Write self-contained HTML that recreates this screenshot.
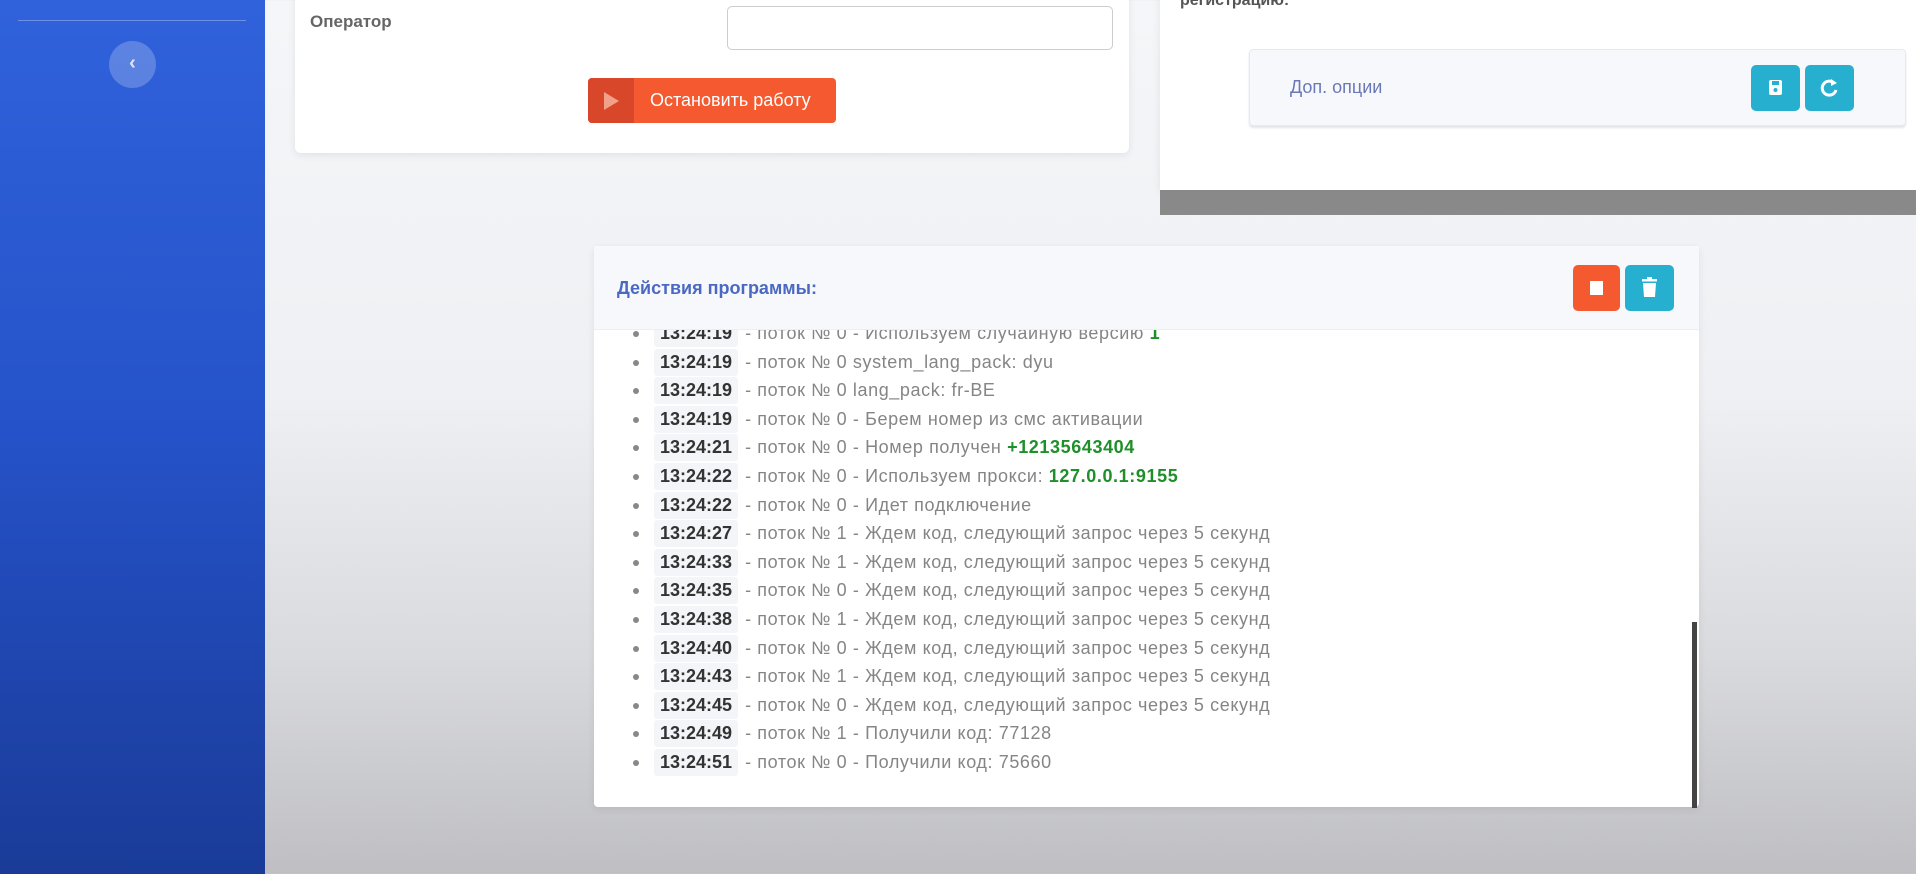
<!DOCTYPE html>
<html><head><meta charset="utf-8"><style>
*{box-sizing:border-box;margin:0;padding:0}
body{width:1916px;height:874px;overflow:hidden;position:relative;font-family:"Liberation Sans","Noto Sans CJK SC",sans-serif;background:linear-gradient(180deg,#f5f6f9 0%,#eef0f3 45%,#d9dadd 75%,#bfbfc3 100%)}
.sb{position:absolute;left:0;top:0;width:265px;height:874px;background:linear-gradient(180deg,#3062dc 0%,#2552c8 50%,#1a3b98 100%)}
.sb .ln{position:absolute;left:18px;top:20px;width:228px;height:1px;background:rgba(255,255,255,.3)}
.sb .cb{position:absolute;left:109px;top:41px;width:47px;height:47px;border-radius:50%;background:rgba(255,255,255,.22);color:#dfe6fb;font-size:20px;text-align:center;line-height:45px;font-weight:bold}
.card{position:absolute;background:#fff;box-shadow:0 2px 8px rgba(0,0,0,.08)}
.c1{left:295px;top:-10px;width:834px;height:163px;border-radius:6px}
.lab{position:absolute;left:15px;top:22px;font-size:17px;color:#666;font-weight:bold}
.inp{position:absolute;left:432px;top:16px;width:386px;height:44px;border:1px solid #ccc;border-radius:5px}
.btn{position:absolute;left:293px;top:88px;width:248px;height:45px;background:#f4592f;border-radius:4px;color:#fff;font-size:18px;overflow:hidden}
.btn .l{position:absolute;left:0;top:0;width:46px;height:45px;background:#d8472a}
.btn .l:after{content:"";position:absolute;left:16px;top:14px;border-left:15px solid #f2a08a;border-top:9px solid transparent;border-bottom:9px solid transparent}
.btn span{position:absolute;left:62px;top:12px}
.c2{left:1160px;top:-10px;width:760px;height:200px}
.c2 .t{position:absolute;left:20px;top:2px;font-size:16px;font-weight:bold;color:#555}
.bar{position:absolute;left:1160px;top:190px;width:756px;height:25px;background:#898989}
.opt{position:absolute;left:1249px;top:49px;width:657px;height:77px;background:#f7f8fb;border:1px solid #e8e9ee;border-radius:4px;box-shadow:0 2px 2px #e2e4ea}
.opt .t{position:absolute;left:40px;top:27px;font-size:18px;color:#6a78b8}
.ib{position:absolute;width:49px;height:46px;border-radius:5px;background:#27afd0}
.lc{left:594px;top:246px;width:1105px;height:561px;border-radius:4px;background:#fff}
.lh{position:absolute;left:0;top:0;width:100%;height:84px;background:#f7f8fb;border-bottom:1px solid #eceef2}
.lh .t{position:absolute;left:23px;top:32px;font-size:18px;color:#4b69c2;font-weight:bold}
ul{position:absolute;left:39px;top:84px;list-style:none;height:460px;overflow:hidden;width:1050px}
li{position:relative;height:28.6px;font-size:18px;letter-spacing:.6px;color:#858585;white-space:nowrap;line-height:27px;padding-left:21px}
li:before{content:"";position:absolute;left:0;top:11px;width:6px;height:6px;border-radius:50%;background:#888}
li b.tm{display:inline-block;background:#f4f5f8;color:#333;padding:0 6px;margin-right:7px;border-radius:3px;letter-spacing:0}
li g{color:#1f8f2a;font-weight:bold}
ul li:first-child{margin-top:-10px}
.sc{position:absolute;left:1692px;top:622px;width:5px;height:186px;background:#444}
</style></head><body>
<div class="sb"><div class="ln"></div><div class="cb">‹</div></div>
<div class="card c1"><div class="lab">Оператор</div><div class="inp"></div>
<div class="btn"><div class="l"></div><span>Остановить работу</span></div></div>
<div class="card c2"><div class="t">регистрацию:</div></div>
<div class="bar"></div>
<div class="opt"><div class="t">Доп. опции</div>
<div class="ib" style="left:501px;top:15px"><svg width="49" height="46"><rect x="18" y="15" width="13" height="15" rx="2" fill="#fff"/><rect x="21" y="16" width="7" height="4" fill="#27afd0"/><circle cx="24.5" cy="25" r="2" fill="#27afd0"/></svg></div>
<div class="ib" style="left:555px;top:15px"><svg width="49" height="46"><path d="M29 18 A7 7 0 1 0 31 25" fill="none" stroke="#fff" stroke-width="3"/><path d="M26 14 L32 18 L26 21Z" fill="#fff"/></svg></div>
</div>
<div class="card lc"><div class="lh"><div class="t">Действия программы:</div>
<div class="ib" style="left:979px;top:19px;width:47px;background:#f4592f"><svg width="47" height="46"><rect x="17" y="16" width="13" height="14" fill="#fff"/></svg></div>
<div class="ib" style="left:1031px;top:19px"><svg width="49" height="46"><rect x="17" y="14" width="15" height="2.5" fill="#fff"/><rect x="22" y="12" width="5" height="2" fill="#fff"/><path d="M18 18 H31 L30 32 H19Z" fill="#fff"/></svg></div>
</div>
<ul>
<li><b class="tm">13:24:19</b>- поток № 0 - Используем случайную версию <g>1</g></li>
<li><b class="tm">13:24:19</b>- поток № 0 system_lang_pack: dyu</li>
<li><b class="tm">13:24:19</b>- поток № 0 lang_pack: fr-BE</li>
<li><b class="tm">13:24:19</b>- поток № 0 - Берем номер из смс активации</li>
<li><b class="tm">13:24:21</b>- поток № 0 - Номер получен <g>+12135643404</g></li>
<li><b class="tm">13:24:22</b>- поток № 0 - Используем прокси: <g>127.0.0.1:9155</g></li>
<li><b class="tm">13:24:22</b>- поток № 0 - Идет подключение</li>
<li><b class="tm">13:24:27</b>- поток № 1 - Ждем код, следующий запрос через 5 секунд</li>
<li><b class="tm">13:24:33</b>- поток № 1 - Ждем код, следующий запрос через 5 секунд</li>
<li><b class="tm">13:24:35</b>- поток № 0 - Ждем код, следующий запрос через 5 секунд</li>
<li><b class="tm">13:24:38</b>- поток № 1 - Ждем код, следующий запрос через 5 секунд</li>
<li><b class="tm">13:24:40</b>- поток № 0 - Ждем код, следующий запрос через 5 секунд</li>
<li><b class="tm">13:24:43</b>- поток № 1 - Ждем код, следующий запрос через 5 секунд</li>
<li><b class="tm">13:24:45</b>- поток № 0 - Ждем код, следующий запрос через 5 секунд</li>
<li><b class="tm">13:24:49</b>- поток № 1 - Получили код: 77128</li>
<li><b class="tm">13:24:51</b>- поток № 0 - Получили код: 75660</li>
</ul>
</div>
<div class="sc"></div>
</body></html>
